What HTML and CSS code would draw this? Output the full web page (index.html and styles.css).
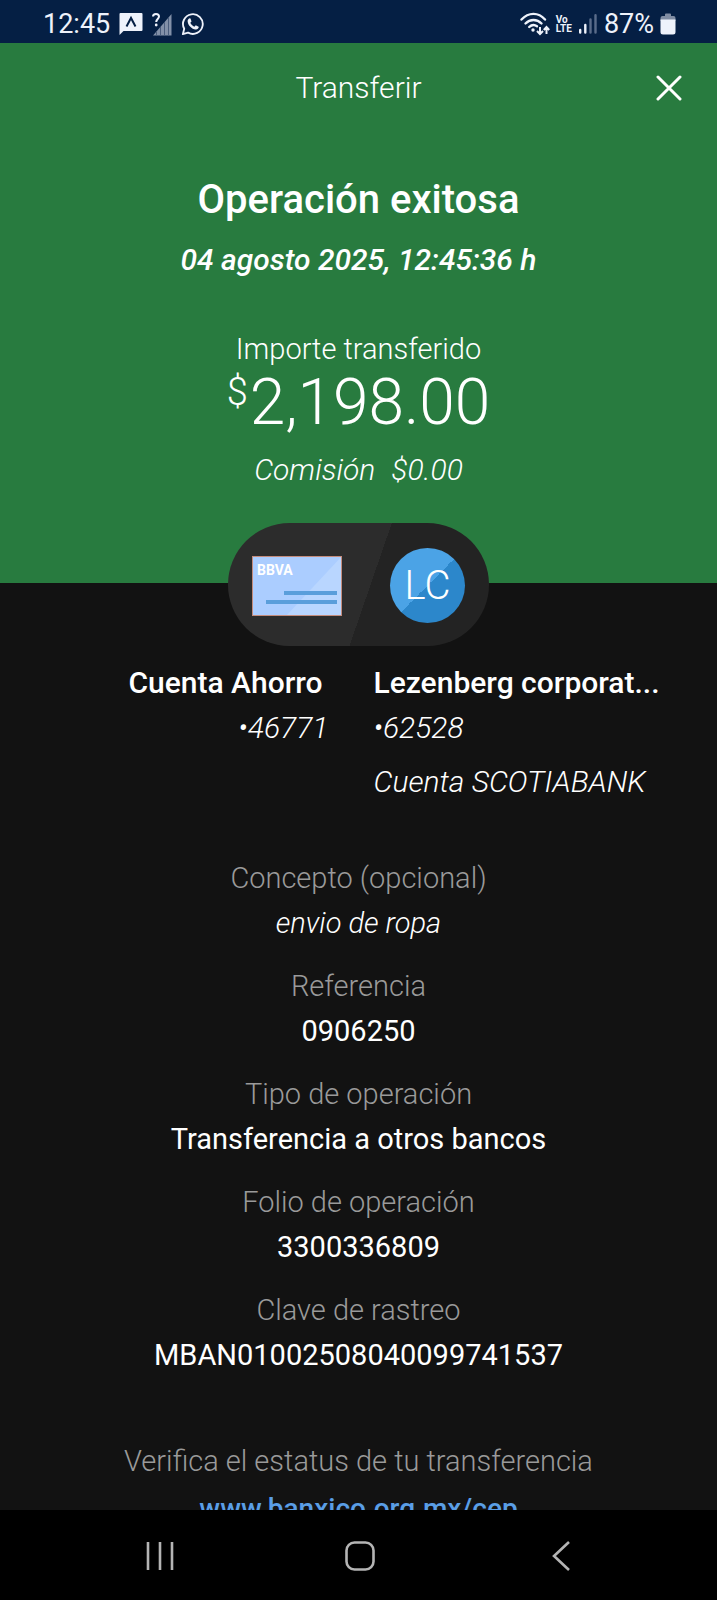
FILE: index.html
```
<!DOCTYPE html>
<html lang="es">
<head>
    <meta charset="UTF-8">
    <meta name="viewport" content="width=device-width, initial-scale=1.0">
    <title>Transferir</title>
    <link rel="stylesheet" href="styles.css">
</head>
<body>
    <!-- System status bar -->
    <div class="status-bar">
        <div class="status-left">
            <span class="status-text">12:45</span>
            <svg width="24" height="24" viewBox="0 0 24 24">
                <path fill="#eef2fb" d="M1.500 1H22.500a1 1 0 0 1 1 1V18a1 1 0 0 1-1 1H4.500L0.500 23V2a1 1 0 0 1 1-1z"/>
                <path fill="none" stroke="#051f44" stroke-width="2" d="M7.500 14.500L12 6L16.500 14.500"/>
            </svg>
            <svg width="20" height="24" viewBox="0 0 20 24">
                <path fill="#8290a8" d="M1 23.500L19.500 2V23.500z"/>
                <path stroke="#4a5d7c" stroke-width="1" d="M4.500 19V23.500M8.500 15V23.500M12.500 10V23.500M16.500 6V23.500"/>
                <path fill="none" stroke="#eef2fb" stroke-width="2" d="M1 4.500C1 1 7 1 7 4.500C7 7 4.200 7 4.200 10"/>
                <circle cx="4.200" cy="13" r="1.400" fill="#eef2fb"/>
            </svg>
            <svg width="24" height="24" viewBox="0 0 26 26">
                <path fill="none" stroke="#eef2fb" stroke-width="2" stroke-linejoin="round" d="M2 24L3.500 18.200A10.700 10.700 0 1 1 7.700 22.400z"/>
                <path fill="#eef2fb" d="M9.400 6.800C8 7.200 7 8.600 7.200 10.200C7.700 14.600 11.600 18.400 15.800 18.900C17.600 19.100 19 18.100 19.200 16.600L19.100 15.900L16 14.300L14.500 16C12.600 15.300 10.800 13.500 10.100 11.700L11.400 10.200L10.300 7.100z"/>
            </svg>
        </div>
        <div class="status-right">
            <svg width="30" height="24" viewBox="0 0 30 24">
                <g fill="none" stroke="#eef2fb" stroke-width="2.400" stroke-linecap="round">
                    <path d="M1.500 7.500C8.500 0 18.500 0 25 7.500"/>
                    <path d="M5.500 11.500C10 6.800 17 6.800 21.500 11.500"/>
                    <path d="M9.200 15C11.600 12.600 14.500 12.400 17 14.200"/>
                </g>
                <circle cx="13" cy="18" r="1.700" fill="#eef2fb"/>
                <path fill="none" stroke="#eef2fb" stroke-width="2" d="M20 15V22M17 19L20 22L23 19M26.500 22V15M23.800 18L26.500 15L29.200 18"/>
            </svg>
            <span class="volte"><span>Vo</span><span>LTE</span></span>
            <svg width="20" height="22" viewBox="0 0 20 22">
                <path stroke="#eef2fb" stroke-width="2.400" stroke-linecap="round" d="M2.200 17V19.500M7.300 12V19.500"/>
                <path stroke="#5a6c8a" stroke-width="2.400" stroke-linecap="round" d="M12.500 6.500V19.500M17.500 2.200V19.500"/>
            </svg>
            <span class="status-text">87%</span>
            <svg width="16" height="22" viewBox="0 0 16 22">
                <path fill="#7f8ca3" d="M5 1.500a1 1 0 0 1 1-1H10a1 1 0 0 1 1 1V3H13.500A2 2 0 0 1 15.500 5V8H.500V5A2 2 0 0 1 2.500 3H5z"/>
                <path fill="#eef2fb" d="M.500 6.500H15.500V19A2.500 2.500 0 0 1 13 21.500H3A2.500 2.500 0 0 1 .500 19z"/>
            </svg>
        </div>
    </div>

    <main class="screen">
        <section class="summary">
            <header class="top-bar">
                <span class="top-title">Transferir</span>
                <button class="close-btn" type="button" aria-label="Cerrar">
                    <svg width="26" height="26" viewBox="0 0 26 26">
                        <path fill="none" stroke="#fff" stroke-width="3" stroke-linecap="round" d="M2 2L24 24M24 2L2 24"/>
                    </svg>
                </button>
            </header>
            <h1>Operación exitosa</h1>
            <p class="date">04 agosto 2025, 12:45:36 h</p>
            <p class="amount-label">Importe transferido</p>
            <p class="amount"><span class="currency">$</span>2,198.00</p>
            <p class="fee"><span>Comisión</span><span>$0.00</span></p>
        </section>

        <section class="details">
            <div class="pill">
                <svg class="card" width="90" height="60" viewBox="0 0 90 60">
                    <rect width="90" height="60" fill="#abcdff"/>
                    <path fill="#b9d6ff" d="M90 0V60H34z"/>
                    <path fill="#5a9edb" d="M32 35H85V39H32zM14 44H85V48H14z"/>
                    <text class="card-brand" x="5" y="19">BBVA</text>
                    <rect x=".500" y=".500" width="89" height="59" fill="none" stroke="#c48c7c"/>
                </svg>
                <div class="avatar">LC</div>
            </div>

            <div class="accounts">
                <div class="account account-from">
                    <strong>Cuenta Ahorro</strong>
                    <em>•46771</em>
                </div>
                <div class="account account-to">
                    <strong>Lezenberg corporat...</strong>
                    <em>•62528</em>
                    <em class="bank">Cuenta SCOTIABANK</em>
                </div>
            </div>

            <dl class="data">
                <div>
                    <dt>Concepto (opcional)</dt>
                    <dd class="concept">envio de ropa</dd>
                </div>
                <div>
                    <dt>Referencia</dt>
                    <dd>0906250</dd>
                </div>
                <div>
                    <dt>Tipo de operación</dt>
                    <dd>Transferencia a otros bancos</dd>
                </div>
                <div>
                    <dt>Folio de operación</dt>
                    <dd>3300336809</dd>
                </div>
                <div>
                    <dt>Clave de rastreo</dt>
                    <dd>MBAN01002508040099741537</dd>
                </div>
            </dl>

            <p class="verify">Verifica el estatus de tu transferencia</p>
            <a class="link" href="#">www.banxico.org.mx/cep</a>
        </section>
    </main>

    <!-- Android navigation -->
    <nav class="nav-bar">
        <button type="button" aria-label="Recientes">
            <svg width="30" height="30" viewBox="0 0 30 30">
                <path stroke="#b4b4b4" stroke-width="2.600" d="M3 1V29M15 1V29M27 1V29"/>
            </svg>
        </button>
        <button type="button" aria-label="Inicio">
            <svg width="30" height="30" viewBox="0 0 30 30">
                <rect x="1.500" y="1.500" width="27" height="27" rx="8" fill="none" stroke="#b4b4b4" stroke-width="2.600"/>
            </svg>
        </button>
        <button type="button" aria-label="Atrás">
            <svg width="30" height="30" viewBox="0 0 30 30">
                <path fill="none" stroke="#b4b4b4" stroke-width="2.600" d="M23 1L8 15L23 29"/>
            </svg>
        </button>
    </nav>
</body>
</html>
```
FILE: styles.css
```
* {
    box-sizing: border-box;
}

body {
    margin: 0;
    height: 100vh;
    display: flex;
    flex-direction: column;
    background: #000;
    color: #fff;
    font-family: Roboto, "Open Sans", sans-serif;
    font-size: 29px;
    font-weight: 300;
    line-height: 36px;
}

h1, p, dl, dd {
    margin: 0;
}

button {
    display: flex;
    padding: 0;
    border: none;
    background: none;
    cursor: pointer;
}

/* Status bar */
.status-bar {
    flex: none;
    height: 43px;
    padding: 5px 41px 0 43px;
    display: flex;
    align-items: center;
    justify-content: space-between;
    background: #051f44;
    color: #eef2fb;
}

.status-left,
.status-right {
    display: flex;
    align-items: center;
    gap: 9px;
}

.status-right {
    gap: 6px;
}

.status-text {
    font-size: 27px;
    font-weight: 400;
}

.volte {
    display: flex;
    flex-direction: column;
    font-size: 10px;
    font-weight: 700;
    line-height: 9px;
}

/* Screen */
.screen {
    flex: 1;
    min-height: 0;
    overflow: hidden;
    background: #121212;
    text-align: center;
}

.summary {
    padding-bottom: 95px;
    background: #287b3f;
}

.top-bar {
    display: grid;
    grid-template-columns: 1fr auto 1fr;
    align-items: center;
    height: 90px;
    padding: 0 35px;
}

.top-title {
    grid-column: 2;
    font-size: 30px;
}

.close-btn {
    justify-self: end;
}

h1 {
    margin-top: 43px;
    font-size: 40px;
    font-weight: 500;
    line-height: 48px;
}

.date {
    margin-top: 18px;
    font-size: 30px;
    font-style: italic;
    font-weight: 500;
}

.amount-label {
    margin-top: 53px;
}

.amount {
    display: flex;
    justify-content: center;
    gap: 2px;
    margin-top: 4px;
    font-size: 64px;
    line-height: 64px;
}

.currency {
    font-size: 38px;
    line-height: 42px;
}

.fee {
    display: flex;
    justify-content: center;
    gap: 16px;
    margin-top: 17px;
    font-size: 30px;
    font-style: italic;
}

/* Details */
.pill {
    display: flex;
    align-items: center;
    justify-content: space-between;
    width: 261px;
    height: 123px;
    margin: -60px auto 19px;
    padding: 2px 24px 0;
    border-radius: 62px;
    background: linear-gradient(109deg, #2c2c2c 54%, #232323 54%);
}

.card-brand {
    fill: #fff;
    font-size: 14px;
    font-weight: 700;
}

.avatar {
    width: 75px;
    height: 75px;
    border-radius: 50%;
    background: linear-gradient(135deg, #4ba3e6 50%, #2c87cb 50%);
    font-size: 40px;
    line-height: 75px;
}

.accounts {
    display: grid;
    grid-template-columns: 1fr 1fr;
    font-size: 30px;
}

.account {
    display: flex;
    flex-direction: column;
    gap: 9px;
    white-space: nowrap;
}

.account strong {
    font-weight: 500;
}

.account-from {
    padding-right: 30px;
    text-align: right;
}

.account-from strong {
    padding-right: 6px;
}

.account-to {
    padding-left: 15px;
    text-align: left;
}

.bank {
    margin-top: 9px;
}

.data {
    display: grid;
    gap: 27px;
    margin-top: 60px;
}

dt {
    margin-bottom: 9px;
    color: #9a9a9a;
}

dd {
    font-weight: 400;
}

.concept {
    font-style: italic;
    font-weight: 300;
}

.verify {
    margin-top: 70px;
    color: #9a9a9a;
}

.link {
    display: block;
    margin-top: 12px;
    color: #5a9ee6;
    font-size: 28px;
    font-weight: 500;
    text-decoration: none;
}

/* Navigation */
.nav-bar {
    flex: none;
    display: flex;
    align-items: center;
    justify-content: space-around;
    height: 90px;
    padding: 2px 56px 0 60px;
}
```
